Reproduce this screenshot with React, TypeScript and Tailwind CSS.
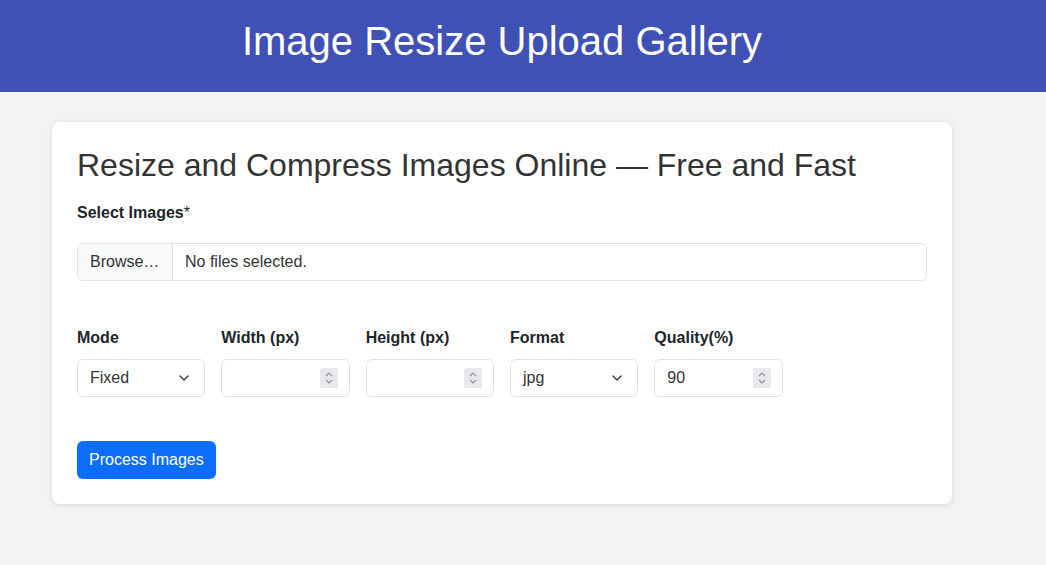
import { ChevronDown } from "lucide-react";

function Spinner() {
    return (
        <div className="flex h-[20px] w-[18px] items-center justify-center rounded-[2px] bg-[#e9e9ed]">
            <svg width="10" height="14" viewBox="0 0 10 14" fill="none" stroke="#8f8f9d" strokeWidth="1.2">
                <path d="M2 5 5 2 8 5" />
                <path d="M2 9 5 12 8 9" />
            </svg>
        </div>
    );
}

function SelectBox({ value }: { value: string }) {
    return (
        <div className="flex h-[38px] items-center justify-between rounded-[6px] border border-[#dee2e6] bg-white pl-3 pr-[12px] text-[16px] text-[#333]">
            <span>{value}</span>
            <ChevronDown className="h-4 w-4 text-[#343a40]" strokeWidth={2} />
        </div>
    );
}

function NumberBox({ value }: { value?: string }) {
    return (
        <div className="flex h-[38px] items-center justify-between rounded-[6px] border border-[#dee2e6] bg-white pl-3 pr-[11px] text-[16px] text-[#333]">
            <span>{value}</span>
            <Spinner />
        </div>
    );
}

export default function App() {
    const fields = [
        { label: "Mode", input: <SelectBox value="Fixed" /> },
        { label: "Width (px)", input: <NumberBox /> },
        { label: "Height (px)", input: <NumberBox /> },
        { label: "Format", input: <SelectBox value="jpg" /> },
        { label: "Quality(%)", input: <NumberBox value="90" /> },
    ];

    return (
        <div className="min-h-[565px] bg-[#f3f3f3] font-['Liberation_Sans',Arial,sans-serif]">
            {/* header */}
            <header className="h-[92px] bg-[#3f51b5]">
                <div className="ml-[52px] w-[900px] pt-[18px] text-center text-[40px] leading-[46px] text-white">
                    Image Resize Upload Gallery
                </div>
            </header>

            {/* card */}
            <main className="ml-[52px] mt-[30px] w-[900px] rounded-[8px] bg-white px-[25px] pb-[25px] pt-[24px] shadow-[0_1px_6px_rgba(0,0,0,0.1)]">
                <h2 className="mb-[17px] text-[32px] leading-[38px] text-[#333]">
                    Resize and Compress Images Online — Free and Fast
                </h2>
                <label className="mb-[18px] block text-[16px] font-bold leading-[24px] text-[#212529]">
                    Select Images<span className="font-normal">*</span>
                </label>
                <div className="flex h-[38px] overflow-hidden rounded-[6px] border border-[#dee2e6] text-[16px] text-[#333]">
                    <div className="flex w-[95px] items-center border-r border-[#dee2e6] bg-[#f8f9fa] pl-3">Browse…</div>
                    <div className="flex items-center pl-3">No files selected.</div>
                </div>

                <div className="mt-[45px] flex gap-4">
                    {fields.map((f) => (
                        <div key={f.label} className="w-[128.33px]">
                            <div className="mb-[9px] text-[16px] font-bold leading-[24px] text-[#212529]">{f.label}</div>
                            {f.input}
                        </div>
                    ))}
                </div>

                <button className="mt-[44px] h-[38px] rounded-[6px] bg-[#0d6efd] px-3 text-[16px] text-white">
                    Process Images
                </button>
            </main>
        </div>
    );
}
